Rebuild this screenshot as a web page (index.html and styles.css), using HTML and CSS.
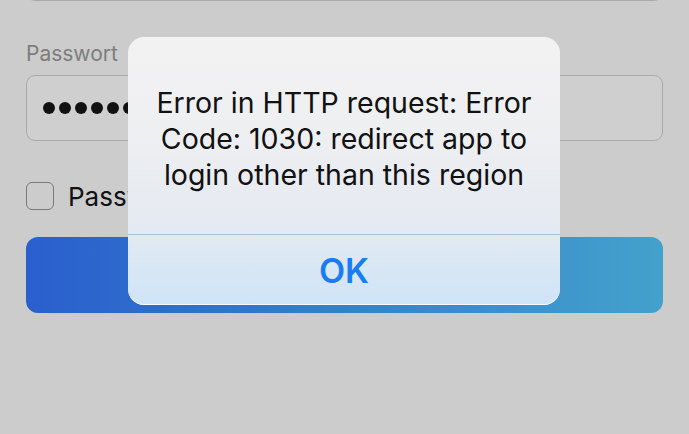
FILE: index.html
```html
<!DOCTYPE html>
<html lang="de">
<head>
<meta charset="utf-8">
<title>Login</title>
<link rel="stylesheet" href="styles.css">
</head>
<body>
<div class="page">
  <div class="field prev-field"></div>
  <label class="label">Passwort</label>
  <div class="field password">
    <span class="dot"></span><span class="dot"></span><span class="dot"></span><span class="dot"></span><span class="dot"></span><span class="dot"></span><span class="dot"></span><span class="dot"></span>
  </div>
  <div class="check-row">
    <span class="checkbox"></span>
    <span class="check-label">Passwort speichern</span>
  </div>
  <div class="button"></div>
</div>

<div class="alert" role="alertdialog">
  <div class="alert-message">Error in HTTP request: Error Code: 1030: redirect app to login other than this region</div>
  <div class="alert-action">OK</div>
</div>
</body>
</html>
```

FILE: styles.css
```css
html, body {
  margin: 0;
  padding: 0;
}

body {
  background: #cccccc;
  width: 689px;
  height: 434px;
  overflow: hidden;
  position: relative;
  font-family: Inter, "Liberation Sans", sans-serif;
}

.page {
  padding: 0 26px;
  display: flex;
  flex-direction: column;
}

.field {
  box-sizing: border-box;
  height: 66px;
  border: 1px solid #a9a9a9;
  border-radius: 9px;
  background: #cfcfcf;
}

.prev-field {
  margin-top: -65px;
}

.label {
  margin-top: 40px;
  font-size: 21px;
  line-height: 26px;
  color: #7d7d7d;
}

.password {
  margin-top: 8px;
  display: flex;
  align-items: center;
  gap: 4px;
  padding-left: 16px;
  overflow: hidden;
}

.dot {
  width: 12px;
  height: 12px;
  border-radius: 50%;
  background: #111;
  flex: none;
}

.check-row {
  margin-top: 41px;
  display: flex;
  align-items: center;
  gap: 14px;
  height: 28px;
}

.checkbox {
  box-sizing: border-box;
  width: 28px;
  height: 28px;
  border: 1.5px solid #787878;
  border-radius: 6px;
  flex: none;
}

.check-label {
  font-size: 26px;
  color: #111;
  white-space: nowrap;
}

.button {
  margin-top: 27px;
  height: 76px;
  border-radius: 12px;
  background: linear-gradient(90deg, #2a5fcd 0%, #3580cc 50%, #43a1cb 100%);
}

.alert {
  position: absolute;
  left: 128px;
  top: 37px;
  width: 432px;
  height: 268px;
  border-radius: 16px;
  overflow: hidden;
  display: flex;
  flex-direction: column;
  background: linear-gradient(180deg, #f2f2f2 0%, #eeeff1 35%, #e4eaf1 72%, #d9e7f4 85%, #cfe4f8 100%);
  box-shadow: inset 0 -1px 0 rgba(255,255,255,0.8);
}

.alert-message {
  height: 198px;
  box-sizing: border-box;
  display: flex;
  align-items: center;
  justify-content: center;
  text-align: center;
  padding: 6px 24px 0;
  font-size: 28.5px;
  line-height: 36px;
  color: #111;
  border-bottom: 1px solid #a8c1d6;
}

.alert-action {
  flex: 1;
  display: flex;
  align-items: center;
  justify-content: center;
  font-size: 34px;
  font-weight: 600;
  color: #1a7cf3;
}
```
